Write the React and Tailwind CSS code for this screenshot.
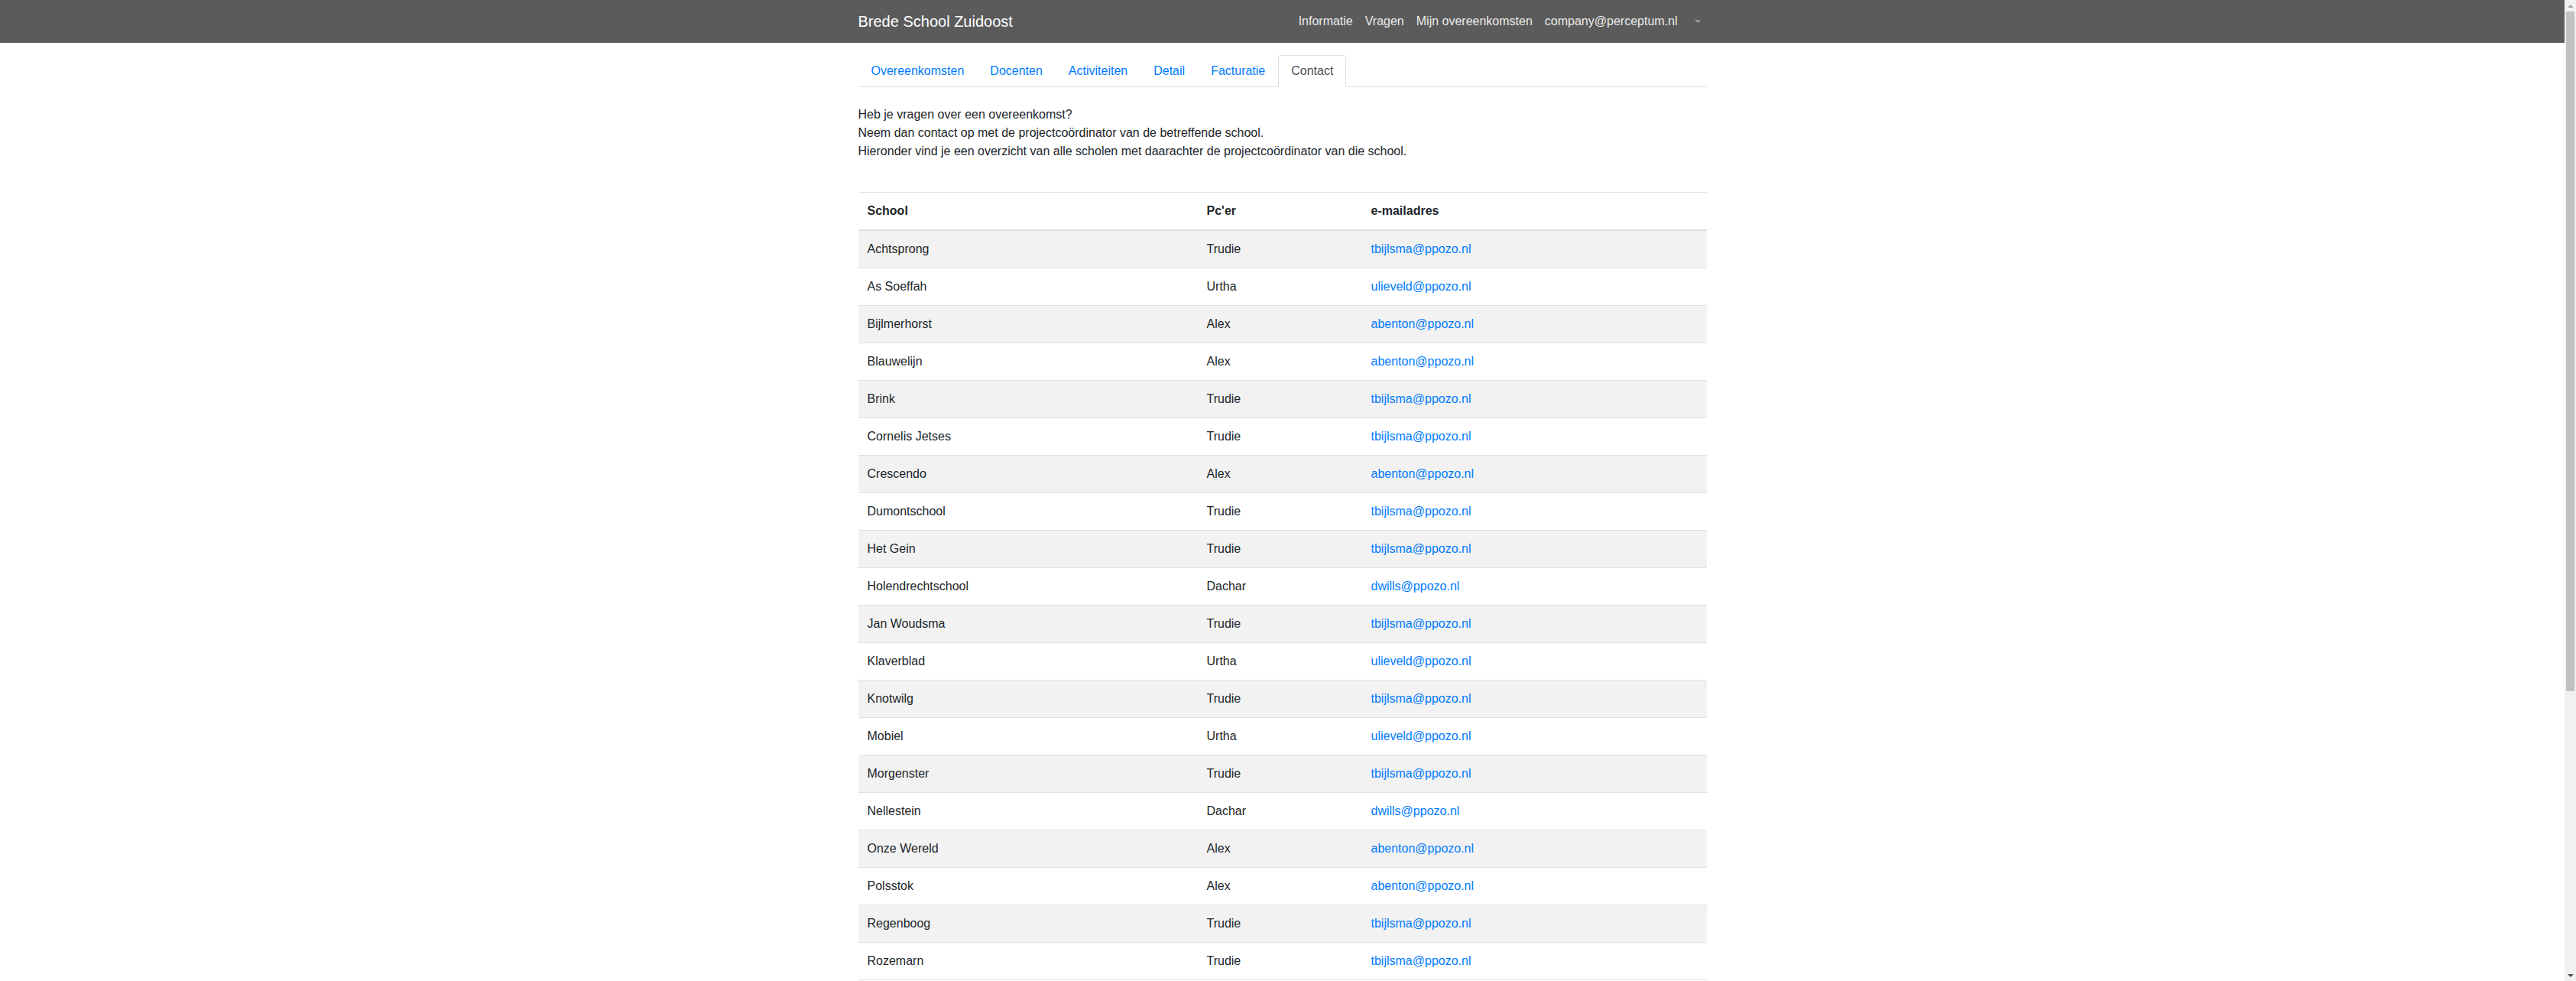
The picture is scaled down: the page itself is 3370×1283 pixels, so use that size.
import { useState } from 'react';

const TABS = ['Overeenkomsten', 'Docenten', 'Activiteiten', 'Detail', 'Facturatie', 'Contact'];

const NAV_LINKS = ['Informatie', 'Vragen', 'Mijn overeenkomsten', 'company@perceptum.nl'];

const SCHOOLS = [
  ['Achtsprong', 'Trudie', 'tbijlsma@ppozo.nl'],
  ['As Soeffah', 'Urtha', 'ulieveld@ppozo.nl'],
  ['Bijlmerhorst', 'Alex', 'abenton@ppozo.nl'],
  ['Blauwelijn', 'Alex', 'abenton@ppozo.nl'],
  ['Brink', 'Trudie', 'tbijlsma@ppozo.nl'],
  ['Cornelis Jetses', 'Trudie', 'tbijlsma@ppozo.nl'],
  ['Crescendo', 'Alex', 'abenton@ppozo.nl'],
  ['Dumontschool', 'Trudie', 'tbijlsma@ppozo.nl'],
  ['Het Gein', 'Trudie', 'tbijlsma@ppozo.nl'],
  ['Holendrechtschool', 'Dachar', 'dwills@ppozo.nl'],
  ['Jan Woudsma', 'Trudie', 'tbijlsma@ppozo.nl'],
  ['Klaverblad', 'Urtha', 'ulieveld@ppozo.nl'],
  ['Knotwilg', 'Trudie', 'tbijlsma@ppozo.nl'],
  ['Mobiel', 'Urtha', 'ulieveld@ppozo.nl'],
  ['Morgenster', 'Trudie', 'tbijlsma@ppozo.nl'],
  ['Nellestein', 'Dachar', 'dwills@ppozo.nl'],
  ['Onze Wereld', 'Alex', 'abenton@ppozo.nl'],
  ['Polsstok', 'Alex', 'abenton@ppozo.nl'],
  ['Regenboog', 'Trudie', 'tbijlsma@ppozo.nl'],
  ['Rozemarn', 'Trudie', 'tbijlsma@ppozo.nl'],
];

// Scrollbar zoals de browser hem tekent
const Scrollbar = () => (
  <div className="flex h-screen w-[15px] shrink-0 flex-col items-center bg-[#f1f1f1]">
    <div className="flex h-[15px] items-center">
      <span className="h-0 w-0 border-x-[4px] border-b-[4px] border-x-transparent border-b-[#a3a3a3]" />
    </div>
    <div className="h-[889px] w-[11px] bg-[#c1c1c1]" />
    <div className="flex-1" />
    <div className="flex h-[15px] items-center">
      <span className="h-0 w-0 border-x-[4px] border-t-[4px] border-x-transparent border-t-[#505050]" />
    </div>
  </div>
);

const App = () => {
  const [activeTab, setActiveTab] = useState('Contact');

  return (
    <div className="flex h-screen bg-white text-[16px] leading-6 text-[#212529] font-['Liberation_Sans',Arial,sans-serif]">
      <div className="h-screen min-w-0 flex-1 overflow-hidden">
        {/* Navbar */}
        <nav className="bg-[#5b5b5b] py-2">
          <div className="mx-auto flex w-[1140px] items-center px-[15px]">
            <a href="#" className="py-[5px] text-[20px] leading-[30px] text-white">
              Brede School Zuidoost
            </a>
            <div className="ml-auto flex items-center">
              {NAV_LINKS.map(link => (
                <a key={link} href="#" className="px-2 py-2 text-[#ececec]">
                  {link}
                </a>
              ))}
              <span className="ml-1.5 flex h-10 items-center px-2">
                <span className="h-0 w-0 border-x-[4px] border-t-[4px] border-x-transparent border-t-[#9a9a9a]" />
              </span>
            </div>
          </div>
        </nav>

        <div className="mx-auto w-[1140px] px-[15px]">
          {/* Tabs */}
          <ul className="mt-4 flex border-b border-[#dee2e6]">
            {TABS.map(tab => (
              <li key={tab} className="-mb-px">
                <button
                  onClick={() => setActiveTab(tab)}
                  className={`block rounded-t border px-4 py-2 ${
                    activeTab === tab
                      ? 'border-[#dee2e6] border-b-white bg-white text-[#495057]'
                      : 'border-transparent text-[#007bff]'
                  }`}
                >
                  {tab}
                </button>
              </li>
            ))}
          </ul>

          {/* Intro */}
          <p className="mt-6 mb-[41px]">
            Heb je vragen over een overeenkomst?
            <br />
            Neem dan contact op met de projectcoördinator van de betreffende school.
            <br />
            Hieronder vind je een overzicht van alle scholen met daarachter de projectcoördinator van die school.
          </p>

          {/* Contact tabel */}
          <table className="w-full table-fixed border-collapse text-left">
            <thead>
              <tr>
                <th className="w-[444px] border-t border-b-2 border-[#dee2e6] p-3 font-bold">School</th>
                <th className="w-[215px] border-t border-b-2 border-[#dee2e6] p-3 font-bold">Pc'er</th>
                <th className="border-t border-b-2 border-[#dee2e6] p-3 font-bold">e-mailadres</th>
              </tr>
            </thead>
            <tbody>
              {SCHOOLS.map(([school, pc, email], i) => (
                <tr key={school} className={i % 2 === 0 ? 'bg-[#f2f2f2]' : 'bg-white'}>
                  <td className="border-b border-[#dee2e6] p-3">{school}</td>
                  <td className="border-b border-[#dee2e6] p-3">{pc}</td>
                  <td className="border-b border-[#dee2e6] p-3">
                    <a href={`mailto:${email}`} className="text-[#007bff]">
                      {email}
                    </a>
                  </td>
                </tr>
              ))}
            </tbody>
          </table>
        </div>
      </div>
      <Scrollbar />
    </div>
  );
};

export default App;
